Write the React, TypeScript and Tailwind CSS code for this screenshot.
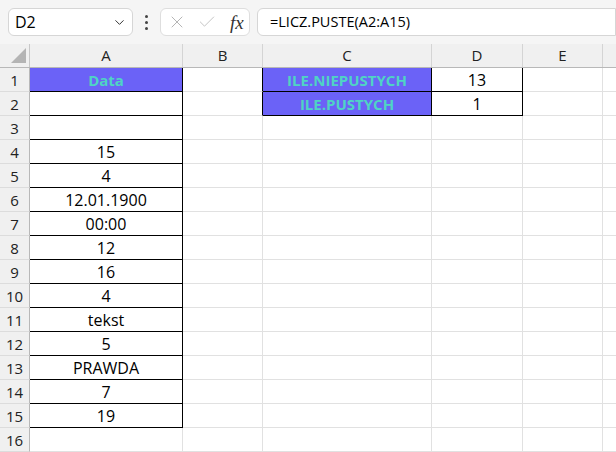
import { ChevronDown, X, Check } from 'lucide-react'

const cols = ['A', 'B', 'C', 'D', 'E']
const widths = ['w-[153px]', 'w-[80px]', 'w-[169px]', 'w-[91px]', 'w-[80px]']

const colA: Record<number, string> = {
  4: '15', 5: '4', 6: '12.01.1900', 7: '00:00', 8: '12', 9: '16', 10: '4',
  11: 'tekst', 12: '5', 13: 'PRAWDA', 14: '7', 15: '19',
}

function Cell({ row, col }: { row: number; col: number }) {
  const inA = col === 0 && row <= 15
  const inCD = (col === 2 || col === 3) && row <= 2
  const purple = (col === 0 && row === 1) || (col === 2 && row <= 2)
  let right = 'border-r-[#e1e1e1]'
  let bottom = 'border-b-[#e1e1e1]'
  if (inA || inCD || (col === 1 && row <= 2)) right = 'border-r-black'
  if (inA || inCD) bottom = 'border-b-black'
  let text = ''
  if (col === 0) text = row === 1 ? 'Data' : colA[row] || ''
  if (col === 2 && row === 1) text = 'ILE.NIEPUSTYCH'
  if (col === 2 && row === 2) text = 'ILE.PUSTYCH'
  if (col === 3 && row === 1) text = '13'
  if (col === 3 && row === 2) text = '1'
  return (
    <div
      className={`${widths[col]} h-[24px] shrink-0 border-r border-b ${right} ${bottom} flex items-center justify-center pt-[1px] ${purple ? 'bg-[#6b62f7] text-[#4fd4c4] font-bold text-[15px]' : 'bg-white text-black text-[16px]'}`}
    >
      {text}
    </div>
  )
}

export default function App() {
  const rows = Array.from({ length: 16 }, (_, i) => i + 1)
  return (
    <div className="w-[616px] h-[452px] overflow-hidden bg-white text-[15px]" style={{ fontFamily: '"Open Sans", "Liberation Sans", sans-serif' }}>
      {/* toolbar */}
      <div className="h-[44px] bg-[#f5f5f5] flex items-center pl-[8px] gap-0">
        <div className="w-[125px] h-[28px] bg-white border border-[#d6d6d6] rounded-md flex items-center justify-between pl-[6px] pr-[5px] text-[16px]">
          <span>D2</span>
          <ChevronDown size={15} strokeWidth={1.6} className="text-[#333]" />
        </div>
        <div className="w-[27px] flex flex-col items-center gap-[3px]">
          <span className="w-[3px] h-[3px] rounded-full bg-[#444]" />
          <span className="w-[3px] h-[3px] rounded-full bg-[#444]" />
          <span className="w-[3px] h-[3px] rounded-full bg-[#444]" />
        </div>
        <div className="w-[90px] h-[28px] bg-white border border-[#dedede] rounded-md flex items-center pl-[6px] gap-[10px]">
          <X size={20} strokeWidth={1.2} className="text-[#b5b5b5]" />
          <Check size={20} strokeWidth={1.2} className="text-[#c5c5c5]" />
          <span className="italic text-[19px] text-[#333] leading-none ml-[3px]" style={{ fontFamily: '"Liberation Serif", serif' }}>fx</span>
        </div>
        <div className="ml-[7px] flex-1 h-[28px] bg-white border border-[#d6d6d6] rounded-l-md flex items-center pl-[12px] text-[14.5px]">
          =LICZ.PUSTE(A2:A15)
        </div>
      </div>

      {/* column headers */}
      <div className="flex h-[24px] bg-[#f0f0f0] border-b border-[#b8b8b8]">
        <div className="w-[30px] shrink-0 border-r border-[#c8c8c8] flex items-end justify-end pr-[3px] pb-[4px]">
          <div className="w-0 h-0 border-l-[15px] border-l-transparent border-b-[15px] border-b-[#b4b4b4]" />
        </div>
        {cols.map((c, i) => (
          <div key={c} className={`${widths[i]} shrink-0 border-r border-[#d4d4d4] flex items-center justify-center text-[#222]`}>
            {c}
          </div>
        ))}
        <div className="flex-1" />
      </div>

      {/* rows */}
      {rows.map(r => (
        <div key={r} className="flex h-[24px]">
          <div className="w-[30px] shrink-0 bg-[#f0f0f0] border-r border-b border-r-[#b8b8b8] border-b-[#dcdcdc] flex items-center justify-center pt-[1px] text-[#222]">
            {r}
          </div>
          {cols.map((_, i) => (
            <Cell key={i} row={r} col={i} />
          ))}
          <div className="flex-1 border-b border-[#e1e1e1]" />
        </div>
      ))}
    </div>
  )
}
